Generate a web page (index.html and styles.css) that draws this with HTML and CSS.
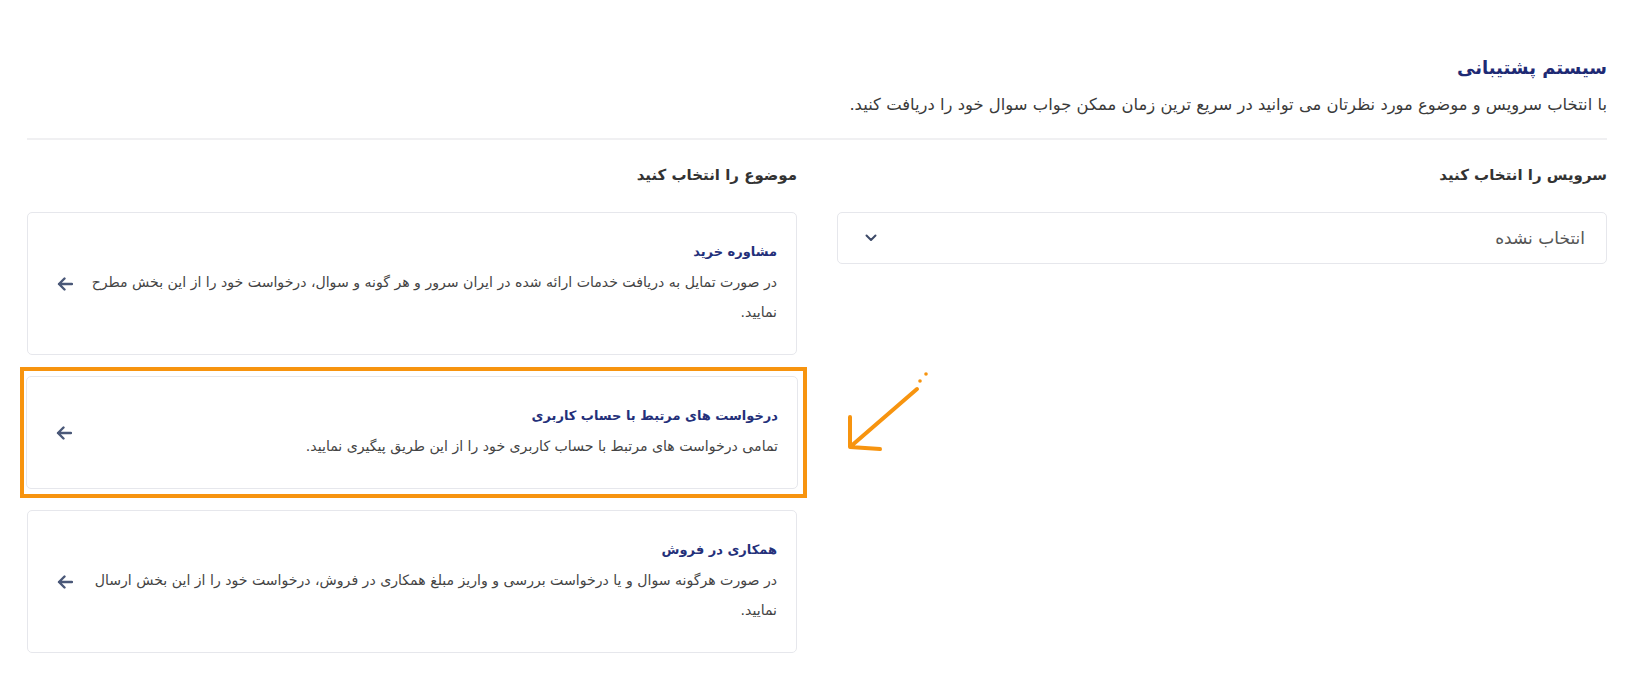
FILE: index.html
```html
<!DOCTYPE html>
<html lang="fa" dir="rtl">
<head>
    <meta charset="utf-8">
    <title>سیستم پشتیبانی</title>
    <link rel="stylesheet" href="styles.css">
</head>
<body>
    <div class="container">
        <div class="page-head">
            <h1>سیستم پشتیبانی</h1>
            <p class="lead">با انتخاب سرویس و موضوع مورد نظرتان می توانید در سریع ترین زمان ممکن جواب سوال خود را دریافت کنید.</p>
        </div>

        <div class="columns">
            <div class="column">
                <h2>سرویس را انتخاب کنید</h2>
                <div class="select-box">
                    <span>انتخاب نشده</span>
                    <svg class="chevron" width="12" height="8" viewBox="0 0 12 8"><path d="M1.5 1.5 L6 6 L10.5 1.5" fill="none" stroke="#3d4a68" stroke-width="2" stroke-linecap="round" stroke-linejoin="round"/></svg>
                </div>
            </div>

            <div class="column">
                <h2>موضوع را انتخاب کنید</h2>
                <div class="topics">
                    <div class="topic-card">
                        <div class="topic-body">
                            <div class="topic-title">مشاوره خرید</div>
                            <div class="topic-desc">در صورت تمایل به دریافت خدمات ارائه شده در ایران سرور و هر گونه و سوال، درخواست خود را از این بخش مطرح نمایید.</div>
                        </div>
                        <svg class="go" width="16" height="14" viewBox="0 0 16 14"><path d="M15 7 H2 M7.5 1.5 L2 7 L7.5 12.5" fill="none" stroke="#4a5878" stroke-width="2.4" stroke-linecap="round" stroke-linejoin="round"/></svg>
                    </div>

                    <div class="highlight">
                        <div class="topic-card short">
                            <div class="topic-body">
                                <div class="topic-title">درخواست های مرتبط با حساب کاربری</div>
                                <div class="topic-desc">تمامی درخواست های مرتبط با حساب کاربری خود را از این طریق پیگیری نمایید.</div>
                            </div>
                            <svg class="go" width="16" height="14" viewBox="0 0 16 14"><path d="M15 7 H2 M7.5 1.5 L2 7 L7.5 12.5" fill="none" stroke="#4a5878" stroke-width="2.4" stroke-linecap="round" stroke-linejoin="round"/></svg>
                        </div>
                        <svg class="pointer" width="95" height="95" viewBox="0 0 95 95">
                            <path d="M77 24 L10 82 M10 82 L10 52 M10 82 L40 84" fill="none" stroke="#f7940f" stroke-width="4" stroke-linecap="round" stroke-linejoin="round"/>
                            <circle cx="80" cy="16" r="1.8" fill="#f7940f"/>
                            <circle cx="86" cy="9" r="1.8" fill="#f7940f"/>
                        </svg>
                    </div>

                    <div class="topic-card">
                        <div class="topic-body">
                            <div class="topic-title">همکاری در فروش</div>
                            <div class="topic-desc">در صورت هرگونه سوال و یا درخواست بررسی و واریز مبلغ همکاری در فروش، درخواست خود را از این بخش ارسال نمایید.</div>
                        </div>
                        <svg class="go" width="16" height="14" viewBox="0 0 16 14"><path d="M15 7 H2 M7.5 1.5 L2 7 L7.5 12.5" fill="none" stroke="#4a5878" stroke-width="2.4" stroke-linecap="round" stroke-linejoin="round"/></svg>
                    </div>
                </div>
            </div>
        </div>
    </div>
</body>
</html>
```

FILE: styles.css
```css
body {
    font-family: "DejaVu Sans", sans-serif;
    margin: 0;
    background: #fff;
    color: #333;
}
.container {
    margin: 0 32px 0 27px;
    padding-top: 54px;
}
.page-head {
    border-bottom: 2px solid #f0f0f2;
    padding-bottom: 20px;
}
h1 {
    margin: 0 0 10px;
    font-size: 18px;
    line-height: 28px;
    font-weight: bold;
    color: #1e2a74;
}
.lead {
    margin: 0;
    font-size: 16.4px;
    line-height: 26px;
    color: #3a3a3a;
}
.columns {
    display: grid;
    grid-template-columns: 1fr 1fr;
    gap: 40px;
    padding-top: 23px;
}
h2 {
    margin: 0 0 25px;
    font-size: 15px;
    font-weight: bold;
    color: #333;
    line-height: 24px;
}
.select-box {
    display: flex;
    align-items: center;
    justify-content: space-between;
    height: 52px;
    padding: 0 21px 0 27px;
    border: 1.5px solid #e6e7ec;
    border-radius: 5px;
    box-sizing: border-box;
    font-size: 17px;
    color: #555;
}
.topics {
    display: flex;
    flex-direction: column;
    gap: 21px;
}
.topic-card {
    display: flex;
    align-items: center;
    gap: 12px;
    min-height: 143px;
    padding: 0 19px 0 29px;
    border: 1.5px solid #e6e7ec;
    border-radius: 5px;
    background: #fff;
    box-sizing: border-box;
}
.topic-card.short {
    min-height: 113px;
}
.topic-body {
    flex: 1;
}
.topic-title {
    font-size: 13px;
    line-height: 24px;
    font-weight: bold;
    color: #24307a;
    margin-bottom: 3px;
}
.topic-desc {
    font-size: 14.1px;
    line-height: 30px;
    color: #444;
}
.go {
    flex: none;
}
.highlight {
    position: relative;
    margin: -9px -10px -9px -7px;
    padding: 5px 5px 5px 2px;
    border: 4px solid #f7940f;
}
.pointer {
    position: absolute;
    left: 816px;
    top: -6px;
}
```
